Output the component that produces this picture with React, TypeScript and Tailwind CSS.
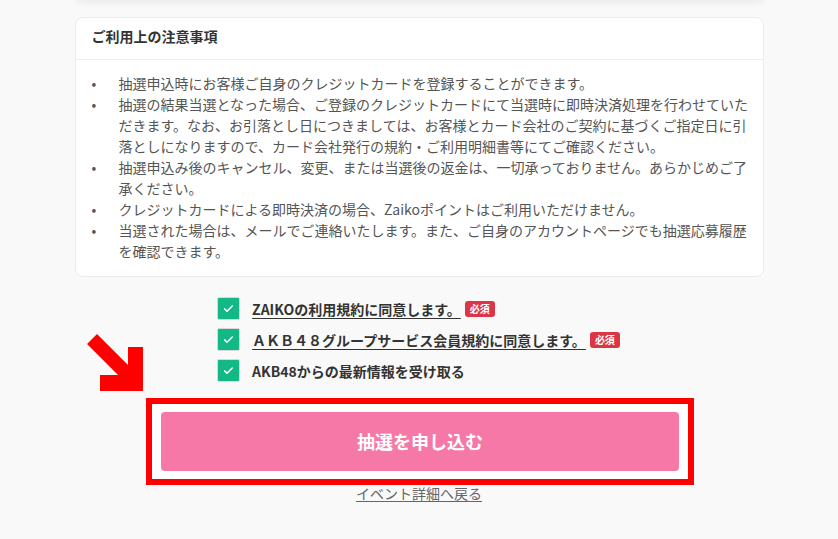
import React from "react";

const notes = [
  "抽選申込時にお客様ご自身のクレジットカードを登録することができます。",
  "抽選の結果当選となった場合、ご登録のクレジットカードにて当選時に即時決済処理を行わせていただきます。なお、お引落とし日につきましては、お客様とカード会社のご契約に基づくご指定日に引落としになりますので、カード会社発行の規約・ご利用明細書等にてご確認ください。",
  "抽選申込み後のキャンセル、変更、または当選後の返金は、一切承っておりません。あらかじめご了承ください。",
  "クレジットカードによる即時決済の場合、Zaikoポイントはご利用いただけません。",
  "当選された場合は、メールでご連絡いたします。また、ご自身のアカウントページでも抽選応募履歴を確認できます。",
];

const agreements = [
  { label: "ZAIKOの利用規約に同意します。", link: true, required: true },
  { label: "ＡＫＢ４８グループサービス会員規約に同意します。", link: true, required: true },
  { label: "AKB48からの最新情報を受け取る", link: false, required: false },
];

function CheckBox() {
  return (
    <span className="flex h-[23px] w-[23px] shrink-0 items-center justify-center rounded-[2px] border border-[#d9d9d9] bg-[#12b886]">
      <svg viewBox="0 0 16 16" className="h-[13px] w-[13px]" fill="none">
        <path
          d="M3.2 8.4l3 2.9 6.4-6.4"
          stroke="#fff"
          strokeWidth="1.9"
          strokeLinecap="round"
          strokeLinejoin="round"
        />
      </svg>
    </span>
  );
}

function Arrow() {
  // red annotation arrow pointing at the submit button
  return (
    <svg
      className="absolute left-[-61px] top-[-65px] h-[60px] w-[60px]"
      viewBox="84 334 60 60"
      aria-hidden
    >
      <polygon
        points="96,335 127,366 127,348 142,348 142,392 99,392 99,376 117,376 86,345"
        fill="#ff0000"
      />
    </svg>
  );
}

export default function App() {
  return (
    <div
      className="min-h-[539px] w-full overflow-hidden bg-[#f9f9f9] text-[#333]"
      style={{ fontFamily: '"Noto Sans CJK JP", "Noto Sans", sans-serif' }}
    >
      <div className="mx-auto w-[689px]">
        {/* bottom of the previous card, mostly scrolled off */}
        <div className="-mt-[30px] h-[28px] rounded-b-lg bg-white shadow-[0_3px_10px_rgba(0,0,0,0.09)]" />

        <section className="mt-[19px] rounded-lg border border-[#ececec] bg-white">
          <h2 className="flex h-[42px] items-center border-b border-[#eeeeee] px-4 pb-[5px] text-[14px] font-bold leading-none text-[#333]">
            ご利用上の注意事項
          </h2>
          <ul className="pb-[14px] pl-4 pr-3 pt-[13px]">
            {notes.map((n) => (
              <li key={n} className="flex text-[14px] leading-[21px] text-[#555]">
                <span className="w-[27px] shrink-0 text-[#555]">•</span>
                <span>{n}</span>
              </li>
            ))}
          </ul>
        </section>
      </div>

      <div className="mt-[20px] flex justify-center">
        <div className="flex flex-col gap-[8px] pr-[1px]">
          {agreements.map((a) => (
            <div key={a.label} className="flex h-[23px] items-center">
              <CheckBox />
              <span
                className={
                  a.link
                    ? "ml-3 text-[14px] font-bold leading-none text-[#333] underline decoration-[1px] underline-offset-[3px]"
                    : "ml-3 text-[14px] font-bold leading-none text-[#333]"
                }
              >
                {a.label}
              </span>
              {a.required && (
                <span className="ml-[4px] flex h-[16px] items-center rounded-[3px] bg-[#dc3545] px-[5px] text-[10px] font-bold leading-none text-white">
                  必須
                </span>
              )}
            </div>
          ))}
        </div>
      </div>

      <div className="mt-[16px] flex justify-center">
        <div className="relative ml-[2px]">
          <Arrow />
          <div className="w-[548px] border-[6px] border-[#ff0000] bg-white px-[9px] py-[8px]">
            <button
              type="button"
              className="flex h-[59px] w-full items-center justify-center rounded-[4px] bg-[#f678a7] text-[18px] font-bold text-white"
            >
              抽選を申し込む
            </button>
          </div>
        </div>
      </div>

      <div className="-mt-[1px] flex justify-center">
        <a className="text-[14px] leading-[18px] text-[#666] underline underline-offset-[2px]">
          イベント詳細へ戻る
        </a>
      </div>
    </div>
  );
}
